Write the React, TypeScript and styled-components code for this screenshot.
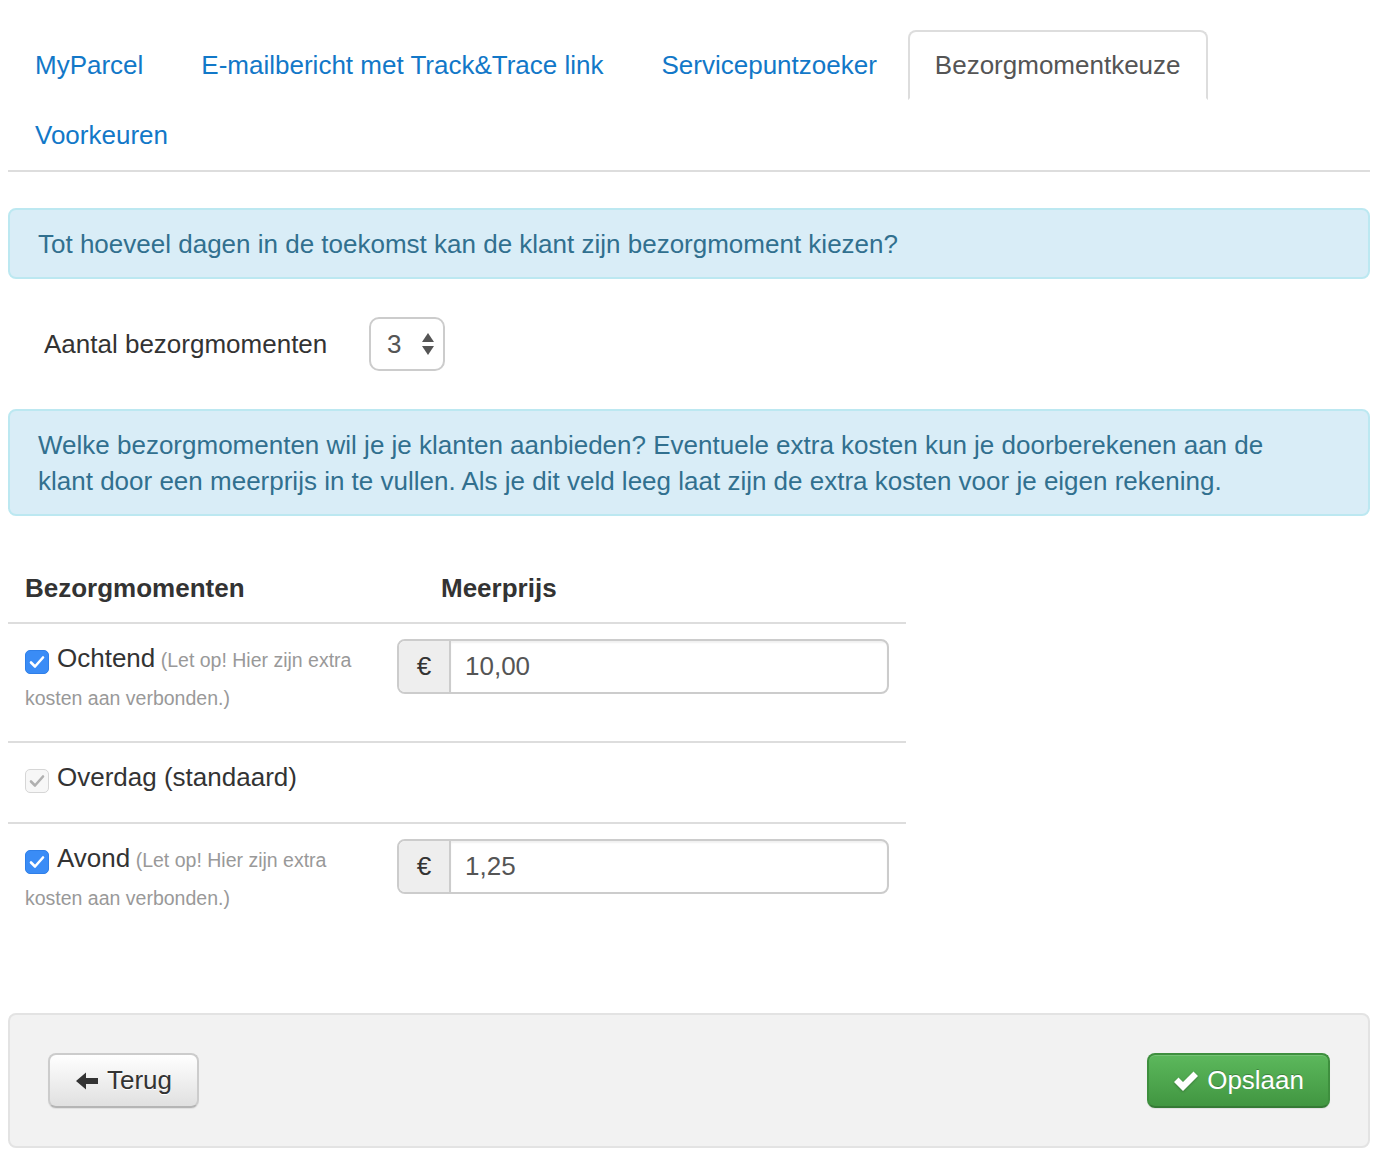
import React from "react";
import styled, { createGlobalStyle } from "styled-components";

const GlobalStyle = createGlobalStyle`
  html, body { margin: 0; padding: 0; background: #fff; }
  body {
    font-family: "Liberation Sans", Helvetica, Arial, sans-serif;
    font-size: 26px;
    color: #333;
  }
  * { box-sizing: border-box; }
`;

const Page = styled.div`
  padding: 30px 18px 13px 8px;
`;

const Tabs = styled.ul`
  display: flex;
  flex-wrap: wrap;
  list-style: none;
  margin: 0;
  padding: 0;
  border-bottom: 2px solid #ddd;
`;

const TabItem = styled.li`
  margin: 0 4px 0 0;
`;

const TabLink = styled.a<{ $active?: boolean }>`
  display: block;
  padding: 18px 25px;
  line-height: 30px;
  font-size: 26px;
  text-decoration: none;
  border: 2px solid ${(p) => (p.$active ? "#ddd" : "transparent")};
  border-bottom-color: ${(p) => (p.$active ? "#fff" : "transparent")};
  border-radius: 8px 8px 0 0;
  background: ${(p) => (p.$active ? "#fff" : "transparent")};
  color: ${(p) => (p.$active ? "#555" : "#1278c8")};
  cursor: pointer;
`;

const Alert = styled.div<{ $top: number }>`
  margin-top: ${(p) => p.$top}px;
  padding: 16px 90px 15px 28px;
  line-height: 36px;
  font-size: 26px;
  color: #31708f;
  background: #d9edf7;
  border: 2px solid #bce8f1;
  border-radius: 8px;
`;

const FormRow = styled.div`
  display: flex;
  align-items: center;
  margin: 38px 0;
`;

const FormLabel = styled.label`
  width: 361px;
  padding-left: 36px;
  font-size: 26px;
  color: #333;
`;

const SelectBox = styled.div`
  width: 76px;
  height: 54px;
  border: 2px solid #ccc;
  border-radius: 10px;
  display: flex;
  align-items: center;
  justify-content: space-between;
  padding: 0 8px 0 16px;
  color: #555;
  font-size: 26px;
`;

const Table = styled.table`
  margin-top: 38px;
  width: 898px;
  border-collapse: collapse;
`;

const Th = styled.th<{ $pl: number }>`
  text-align: left;
  font-weight: bold;
  font-size: 26px;
  line-height: 36px;
  padding: 16px 17px 16px ${(p) => p.$pl}px;
  border-bottom: 2px solid #ddd;
  color: #333;
`;

const Tr = styled.tr`
  & + & td { border-top: 2px solid #ddd; }
`;

const Td = styled.td<{ $w?: number }>`
  vertical-align: top;
  padding: 15px 17px 15px;
  width: ${(p) => (p.$w ? `${p.$w}px` : "auto")};
`;

const CheckLabel = styled.div`
  line-height: 38px;
  margin-bottom: 11px;
  font-size: 26px;
  color: #333;
`;

const Box = styled.span<{ $disabled?: boolean }>`
  display: inline-flex;
  align-items: center;
  justify-content: center;
  width: 24px;
  height: 24px;
  margin-right: 8px;
  vertical-align: -2px;
  line-height: 1;
  border-radius: 5px;
  background: ${(p) => (p.$disabled ? "#f7f7f7" : "#3a8cf6")};
  border: 1px solid ${(p) => (p.$disabled ? "#d6d6d6" : "#2f7fe8")};
`;

const Hint = styled.span`
  font-size: 19.5px;
  line-height: 1;
  color: #999;
`;

const InputGroup = styled.div`
  display: flex;
  width: 492px;
  height: 55px;
  border: 2px solid #ccc;
  border-radius: 8px;
  overflow: hidden;
`;

const Addon = styled.span`
  width: 52px;
  display: flex;
  align-items: center;
  justify-content: center;
  background: #eee;
  border-right: 2px solid #ccc;
  color: #333;
  font-size: 26px;
`;

const Input = styled.div`
  flex: 1;
  display: flex;
  align-items: center;
  padding: 0 14px;
  color: #555;
  font-size: 26px;
  box-shadow: inset 0 2px 2px rgba(0, 0, 0, 0.06);
`;

const Footer = styled.div`
  margin-top: 72px;
  display: flex;
  justify-content: space-between;
  padding: 38px;
  background: #f2f2f2;
  border: 2px solid #e3e3e3;
  border-radius: 8px;
`;

const Button = styled.button<{ $primary?: boolean }>`
  height: 55px;
  display: inline-flex;
  align-items: center;
  gap: 8px;
  padding: 0 ${(p) => (p.$primary ? "24px" : "25px")};
  font-family: "Liberation Sans", Helvetica, Arial, sans-serif;
  font-size: 26px;
  border-radius: 8px;
  cursor: pointer;
  color: ${(p) => (p.$primary ? "#fff" : "#333")};
  text-shadow: ${(p) =>
    p.$primary ? "0 -1px 0 rgba(0,0,0,0.25)" : "0 1px 0 #fff"};
  background: ${(p) =>
    p.$primary
      ? "linear-gradient(to bottom, #5cb85c 0%, #419641 100%)"
      : "linear-gradient(to bottom, #fff 0%, #e0e0e0 100%)"};
  border: 2px solid ${(p) => (p.$primary ? "#3e8f3e" : "#ccc")};
  border-bottom-color: ${(p) => (p.$primary ? "#357a35" : "#b5b5b5")};
  box-shadow: inset 0 1px 0 rgba(255, 255, 255, 0.15), 0 1px 1px rgba(0, 0, 0, 0.075);
`;

const Check = ({ color }: { color: string }) => (
  <svg width="16" height="14" viewBox="0 0 16 14">
    <path d="M2 7.5 L6 11.5 L14 2.5" fill="none" stroke={color} strokeWidth="2.6" strokeLinecap="round" strokeLinejoin="round" />
  </svg>
);

const Arrows = () => (
  <svg width="14" height="26" viewBox="0 0 14 26">
    <path d="M7 2 L13 11 H1 Z" fill="#555" />
    <path d="M7 24 L13 15 H1 Z" fill="#555" />
  </svg>
);

const ArrowLeft = () => (
  <svg width="24" height="20" viewBox="0 0 24 20">
    <path d="M1 10 L11 1.5 V7 H23 V13 H11 V18.5 Z" fill="#333" />
  </svg>
);

const OkIcon = () => (
  <svg width="26" height="24" viewBox="0 0 26 24" style={{ filter: "drop-shadow(0 1px 1px rgba(0,0,0,0.25))" }}>
    <path d="M1 13 L5.5 8.5 L10 13 L20.5 2.5 L25 7 L10 22 Z" fill="#fff" />
  </svg>
);

const tabs = ["MyParcel", "E-mailbericht met Track&Trace link", "Servicepuntzoeker", "Bezorgmomentkeuze", "Voorkeuren"];

type Row = { name: string; price?: string; disabled?: boolean };
const rows: Row[] = [
  { name: "Ochtend", price: "10,00" },
  { name: "Overdag (standaard)", disabled: true },
  { name: "Avond", price: "1,25" },
];

export default function App() {
  return (
    <Page>
      <GlobalStyle />
      <Tabs>
        {tabs.map((t) => (
          <TabItem key={t}>
            <TabLink $active={t === "Bezorgmomentkeuze"}>{t}</TabLink>
          </TabItem>
        ))}
      </Tabs>

      <Alert $top={36}>Tot hoeveel dagen in de toekomst kan de klant zijn bezorgmoment kiezen?</Alert>

      <FormRow>
        <FormLabel>Aantal bezorgmomenten</FormLabel>
        <SelectBox>
          <span>3</span>
          <Arrows />
        </SelectBox>
      </FormRow>

      <Alert $top={0}>
        Welke bezorgmomenten wil je je klanten aanbieden? Eventuele extra kosten kun je doorberekenen aan de
        klant door een meerprijs in te vullen. Als je dit veld leeg laat zijn de extra kosten voor je eigen rekening.
      </Alert>

      <Table>
        <thead>
          <tr>
            <Th $pl={17}>Bezorgmomenten</Th>
            <Th $pl={61}>Meerprijs</Th>
          </tr>
        </thead>
        <tbody>
          {rows.map((r) => (
            <Tr key={r.name}>
              <Td $w={372}>
                <CheckLabel>
                  <Box $disabled={r.disabled}>
                    <Check color={r.disabled ? "#b0b0b0" : "#fff"} />
                  </Box>
                  {r.name}
                  {!r.disabled && <Hint> (Let op! Hier zijn extra kosten aan verbonden.)</Hint>}
                </CheckLabel>
              </Td>
              <Td>
                {r.price && (
                  <InputGroup>
                    <Addon>€</Addon>
                    <Input>{r.price}</Input>
                  </InputGroup>
                )}
              </Td>
            </Tr>
          ))}
        </tbody>
      </Table>

      <Footer>
        <Button>
          <ArrowLeft />
          Terug
        </Button>
        <Button $primary>
          <OkIcon />
          Opslaan
        </Button>
      </Footer>
    </Page>
  );
}
